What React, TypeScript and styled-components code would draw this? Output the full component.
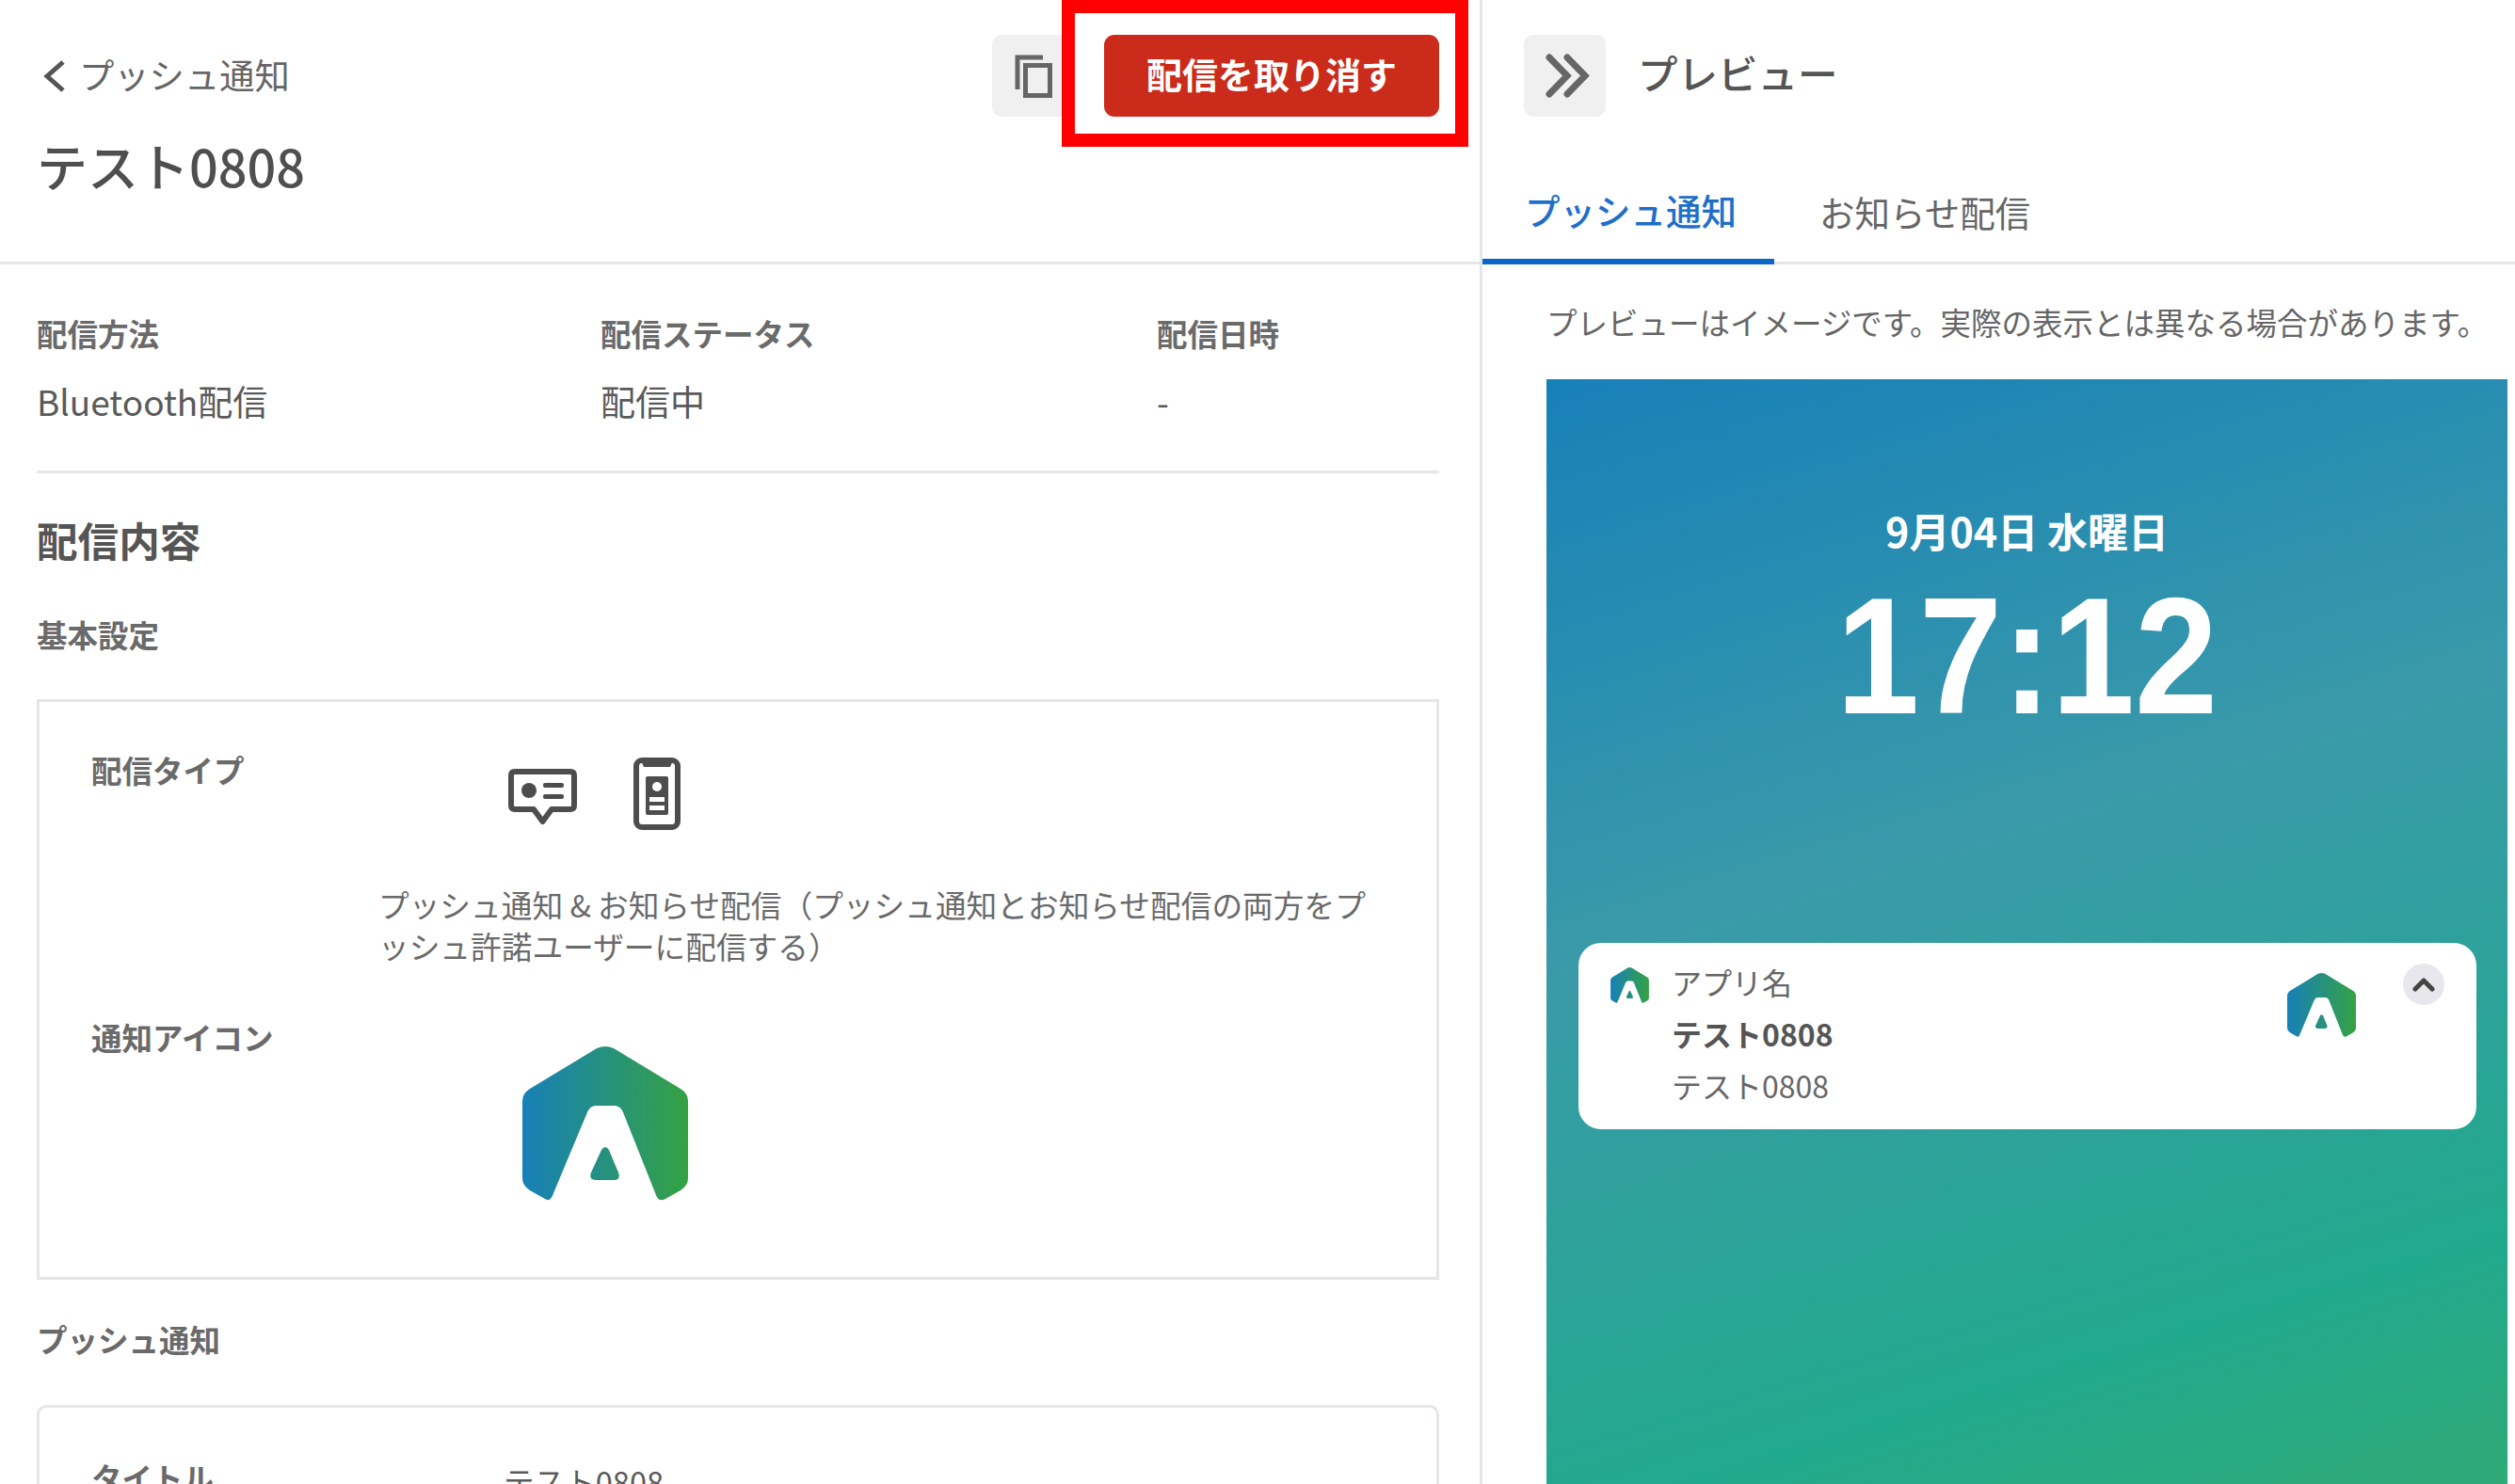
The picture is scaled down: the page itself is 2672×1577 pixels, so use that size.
import React, { useId } from "react";
import styled, { createGlobalStyle } from "styled-components";

const Global = createGlobalStyle`
  html, body { margin: 0; padding: 0; background: #fff; overflow: hidden; }
  #root { width: 2672px; height: 1577px; overflow: hidden; }
  * { box-sizing: border-box; }
  body { font-family: "Noto Sans CJK JP", "Noto Sans", sans-serif; color: #555; }
`;

const LINE = "#e5e6ea";

const Page = styled.div`
  display: grid;
  grid-template-columns: 1572px 1fr;
  width: 2672px;
  height: 1577px;
  overflow: hidden;
`;
const LeftPanel = styled.section`
  min-width: 0;
  height: 1577px;
  overflow: hidden;
`;
const RightPanel = styled.section`
  min-width: 0;
  height: 1577px;
  overflow: hidden;
  border-left: 3px solid ${LINE};
`;
const DetailHeader = styled.header`
  height: 281px;
  padding: 37px 43px 0 39px;
  border-bottom: 3px solid ${LINE};
`;
const TopRow = styled.div`
  display: flex;
  align-items: center;
  justify-content: space-between;
  height: 87px;
`;
const BackLink = styled.a`
  display: flex;
  align-items: center;
  gap: 14px;
  padding-left: 7px;
  color: #666;
`;
const BackText = styled.span`
  margin-top: -4px;
  font-size: 37.3px;
  line-height: 50px;
`;
const Actions = styled.div`
  display: flex;
  gap: 32px;
`;
const IconButton = styled.button`
  display: flex;
  align-items: center;
  justify-content: center;
  width: 87px;
  height: 87px;
  padding: 0;
  border: 0;
  border-radius: 10px;
  background: #f0f0f0;
`;
const DangerWrap = styled.div`
  position: relative;
`;
const DangerButton = styled.button`
  display: block;
  width: 356px;
  height: 87px;
  padding: 0 0 5px;
  border: 0;
  border-radius: 11px;
  background: #cb2b1a;
  color: #fff;
  font-family: inherit;
  font-weight: 700;
  font-size: 38px;
  line-height: 80px;
`;
const Highlight = styled.div`
  position: absolute;
  left: -45px;
  top: -37px;
  width: 432px;
  height: 156px;
  border: 14px solid #ff0000;
  pointer-events: none;
`;
const Title = styled.h1`
  margin: 22px 0 0;
  font-size: 54px;
  line-height: 60px;
  font-weight: 500;
  color: #4f4f4f;
`;
const Body = styled.div`
  padding: 0 43px 0 39px;
`;
const MetaGrid = styled.div`
  display: grid;
  grid-template-columns: 599px 591px 1fr;
  padding: 51px 0 49px;
  border-bottom: 3px solid ${LINE};
`;
const MetaItem = styled.div`
  display: flex;
  flex-direction: column;
  gap: 25px;
`;
const FieldLabel = styled.div`
  font-size: 32.5px;
  line-height: 44px;
  font-weight: 700;
  color: #6a6a6a;
`;
const MetaValue = styled.div`
  font-size: 37px;
  line-height: 50px;
  color: #5a5a5a;
`;
const SectionTitle = styled.h2`
  margin: 40px 0 49px;
  font-size: 43.6px;
  line-height: 60px;
  font-weight: 700;
  color: #555;
`;
const GroupTitle = styled.h3<{ $after: number }>`
  margin: 0 0 ${(p) => p.$after}px;
  font-size: 32.5px;
  line-height: 44px;
  font-weight: 700;
  color: #6a6a6a;
`;
const BasicBox = styled.div`
  height: 617px;
  margin-bottom: 41px;
  padding: 50px 55px 0;
  border: 3px solid ${LINE};
`;
const PushBox = styled.div`
  height: 300px;
  padding: 52px 55px 0;
  border: 3px solid ${LINE};
  border-radius: 10px;
`;
const FieldRow = styled.div<{ $gap?: number }>`
  display: grid;
  grid-template-columns: 305px 1fr;
  margin-bottom: ${(p) => p.$gap ?? 0}px;
`;
const TypeIcons = styled.div`
  display: flex;
  align-items: flex-end;
  gap: 60px;
  height: 77px;
  margin: 9px 0 57px 138px;
  svg:first-child {
    margin-bottom: 5px;
  }
`;
const Description = styled.p`
  margin: 0;
  font-size: 32.7px;
  line-height: 44px;
  color: #6a6a6a;
`;
const IconSlot = styled.div`
  margin: 32px 0 0 153px;
`;
const PlainValue = styled.div`
  padding: 4px 0 0 133px;
  font-size: 32.6px;
  line-height: 44px;
  color: #5a5a5a;
`;
const PreviewHead = styled.div`
  display: flex;
  align-items: center;
  gap: 34px;
  height: 170px;
  padding: 37px 0 46px 44px;
`;
const PreviewTitle = styled.h2`
  margin: -8px 0 0;
  font-size: 42.5px;
  line-height: 60px;
  font-weight: 500;
  color: #555;
`;
const Tabs = styled.div`
  display: flex;
  height: 111px;
  border-bottom: 3px solid ${LINE};
`;
const Tab = styled.div<{ $active?: boolean }>`
  display: flex;
  align-items: center;
  height: ${(p) => (p.$active ? 111 : 108)}px;
  padding: ${(p) => (p.$active ? "0 40px 0 45px" : "1px 48px 0")};
  border-bottom: ${(p) => (p.$active ? "6px solid #0a66c8" : "0")};
  font-size: 37.5px;
  line-height: 50px;
  font-weight: ${(p) => (p.$active ? 500 : 400)};
  color: ${(p) => (p.$active ? "#1f6fc9" : "#666")};
`;
const PreviewBody = styled.div`
  padding: 39px 0 0 68px;
`;
const PreviewNote = styled.p`
  margin: 0 0 39px;
  font-size: 32.5px;
  line-height: 44px;
  color: #666;
  white-space: nowrap;
`;
const LockScreen = styled.div`
  width: 1021px;
  height: 1174px;
  padding-top: 130px;
  background: linear-gradient(163deg, #1780b8 0%, #3a9aa9 42%, #21a98d 82%, #2fa977 100%);
  text-align: center;
  color: #fff;
`;
const DateLine = styled.div`
  font-size: 43px;
  line-height: 60px;
  font-weight: 700;
`;
const TimeLine = styled.div`
  margin-top: 16px;
  font-family: "Liberation Sans", Arial, sans-serif;
  font-size: 176px;
  line-height: 176px;
  font-weight: 700;
  transform: scaleX(0.9);
`;
const Card = styled.div`
  display: flex;
  align-items: flex-start;
  width: 954px;
  height: 198px;
  margin: 217px 0 0 34px;
  padding: 14px 34px 0;
  border-radius: 24px;
  background: #fff;
  text-align: left;
  color: #666;
`;
const CardIcon = styled.div`
  margin: 12px 24px 0 0;
  line-height: 0;
`;
const CardText = styled.div`
  flex: 1;
  font-size: 32px;
  line-height: 55px;
`;
const CardTitle = styled.div`
  font-weight: 700;
  color: #555;
`;
const CardThumb = styled.div`
  margin: 18px 50px 0 0;
  line-height: 0;
`;
const Collapse = styled.div`
  display: flex;
  align-items: center;
  justify-content: center;
  width: 44px;
  height: 44px;
  margin-top: 8px;
  border-radius: 50%;
  background: #e8e8ec;
`;

const Logo = ({ width, height }: { width: number; height: number }) => {
  const id = useId();
  return (
    <svg width={width} height={height} viewBox="0 0 176 164" aria-hidden="true">
      <defs>
        <linearGradient id={id} gradientUnits="userSpaceOnUse" x1="0" y1="0" x2="176" y2="0">
          <stop offset="0" stopColor="#1780b8" />
          <stop offset="1" stopColor="#35a244" />
        </linearGradient>
      </defs>
      <path
        fill={`url(#${id})`}
        fillRule="evenodd"
        d="M79 2 Q88 -2 97 2 L168 45 Q176 50 176 58 L176 140 Q176 148 168 153 L152 162 Q145 166 142 158 L107 70 Q104 63 98 63 L78 63 Q72 63 69 70 L33 156 Q30 166 24 162 L8 153 Q0 148 0 140 L0 58 Q0 50 8 45 Z M84 110 Q88 104 92 110 L102 134 Q105 142 97 142 L79 142 Q70 142 73 134 Z"
      />
    </svg>
  );
};

const BackChevron = () => (
  <svg width="24" height="36" viewBox="0 0 24 36" aria-hidden="true">
    <path d="M21 3 L4 18 L21 33" fill="none" stroke="#555" strokeWidth="5" />
  </svg>
);
const CopyIcon = () => (
  <svg width="40" height="46" viewBox="0 0 40 46" aria-hidden="true">
    <path d="M3 37 V3 H30" fill="none" stroke="#666" strokeWidth="5" />
    <rect x="11.5" y="11.5" width="26" height="32" fill="none" stroke="#666" strokeWidth="5" />
  </svg>
);
const DoubleChevron = () => (
  <svg width="87" height="87" viewBox="0 0 87 87" aria-hidden="true">
    <path
      d="M27 24 L46 43.5 L27 63 M46 24 L65 43.5 L46 63"
      fill="none"
      stroke="#666"
      strokeWidth="7"
      strokeLinecap="round"
    />
  </svg>
);
const ChatIcon = () => (
  <svg width="73" height="60" viewBox="0 0 73 60" aria-hidden="true">
    <path
      d="M7 3 H66 Q70 3 70 7 V39 Q70 43 66 43 H46 L36.5 56 L27 43 H7 Q3 43 3 39 V7 Q3 3 7 3 Z"
      fill="none"
      stroke="#4d4d4d"
      strokeWidth="6"
      strokeLinejoin="round"
    />
    <circle cx="22" cy="23" r="8" fill="#4d4d4d" />
    <rect x="37" y="15" width="22" height="5" rx="2" fill="#4d4d4d" />
    <rect x="37" y="27" width="22" height="5" rx="2" fill="#4d4d4d" />
  </svg>
);
const PhoneIcon = () => (
  <svg width="50" height="77" viewBox="0 0 50 77" aria-hidden="true">
    <rect x="3" y="3" width="44" height="71" rx="6" fill="none" stroke="#4d4d4d" strokeWidth="6" />
    <path d="M8 3 H42 L39 10 H11 Z" fill="#4d4d4d" />
    <rect x="13" y="20" width="24" height="41" rx="2" fill="#4d4d4d" />
    <circle cx="25" cy="31" r="5" fill="#fff" />
    <rect x="17" y="42" width="16" height="5" fill="#fff" />
    <rect x="17" y="51" width="16" height="5" fill="#fff" />
  </svg>
);
const ChevronUp = () => (
  <svg width="24" height="16" viewBox="0 0 24 16" aria-hidden="true">
    <path d="M3 13 L12 4 L21 13" fill="none" stroke="#444" strokeWidth="5" strokeLinecap="round" strokeLinejoin="round" />
  </svg>
);

export default function App() {
  return (
    <Page>
      <Global />
      <LeftPanel>
        <DetailHeader>
          <TopRow>
            <BackLink>
              <BackChevron />
              <BackText>プッシュ通知</BackText>
            </BackLink>
            <Actions>
              <IconButton aria-label="コピー">
                <CopyIcon />
              </IconButton>
              <DangerWrap>
                <DangerButton>配信を取り消す</DangerButton>
                <Highlight />
              </DangerWrap>
            </Actions>
          </TopRow>
          <Title>テスト0808</Title>
        </DetailHeader>
        <Body>
          <MetaGrid>
            <MetaItem>
              <FieldLabel>配信方法</FieldLabel>
              <MetaValue>Bluetooth配信</MetaValue>
            </MetaItem>
            <MetaItem>
              <FieldLabel>配信ステータス</FieldLabel>
              <MetaValue>配信中</MetaValue>
            </MetaItem>
            <MetaItem>
              <FieldLabel>配信日時</FieldLabel>
              <MetaValue>-</MetaValue>
            </MetaItem>
          </MetaGrid>
          <SectionTitle>配信内容</SectionTitle>
          <GroupTitle $after={47}>基本設定</GroupTitle>
          <BasicBox>
            <FieldRow $gap={53}>
              <FieldLabel>配信タイプ</FieldLabel>
              <div>
                <TypeIcons>
                  <ChatIcon />
                  <PhoneIcon />
                </TypeIcons>
                <Description>
                  プッシュ通知 &amp; お知らせ配信（プッシュ通知とお知らせ配信の両方をプッシュ許諾ユーザーに配信する）
                </Description>
              </div>
            </FieldRow>
            <FieldRow>
              <FieldLabel>通知アイコン</FieldLabel>
              <IconSlot>
                <Logo width={176} height={164} />
              </IconSlot>
            </FieldRow>
          </BasicBox>
          <GroupTitle $after={48}>プッシュ通知</GroupTitle>
          <PushBox>
            <FieldRow>
              <FieldLabel>タイトル</FieldLabel>
              <PlainValue>テスト0808</PlainValue>
            </FieldRow>
          </PushBox>
        </Body>
      </LeftPanel>
      <RightPanel>
        <PreviewHead>
          <IconButton aria-label="閉じる">
            <DoubleChevron />
          </IconButton>
          <PreviewTitle>プレビュー</PreviewTitle>
        </PreviewHead>
        <Tabs>
          <Tab $active>プッシュ通知</Tab>
          <Tab>お知らせ配信</Tab>
        </Tabs>
        <PreviewBody>
          <PreviewNote>プレビューはイメージです。実際の表示とは異なる場合があります。</PreviewNote>
          <LockScreen>
            <DateLine>9月04日 水曜日</DateLine>
            <TimeLine>17:12</TimeLine>
            <Card>
              <CardIcon>
                <Logo width={41} height={38} />
              </CardIcon>
              <CardText>
                アプリ名
                <CardTitle>テスト0808</CardTitle>
                テスト0808
              </CardText>
              <CardThumb>
                <Logo width={73} height={68} />
              </CardThumb>
              <Collapse>
                <ChevronUp />
              </Collapse>
            </Card>
          </LockScreen>
        </PreviewBody>
      </RightPanel>
    </Page>
  );
}
